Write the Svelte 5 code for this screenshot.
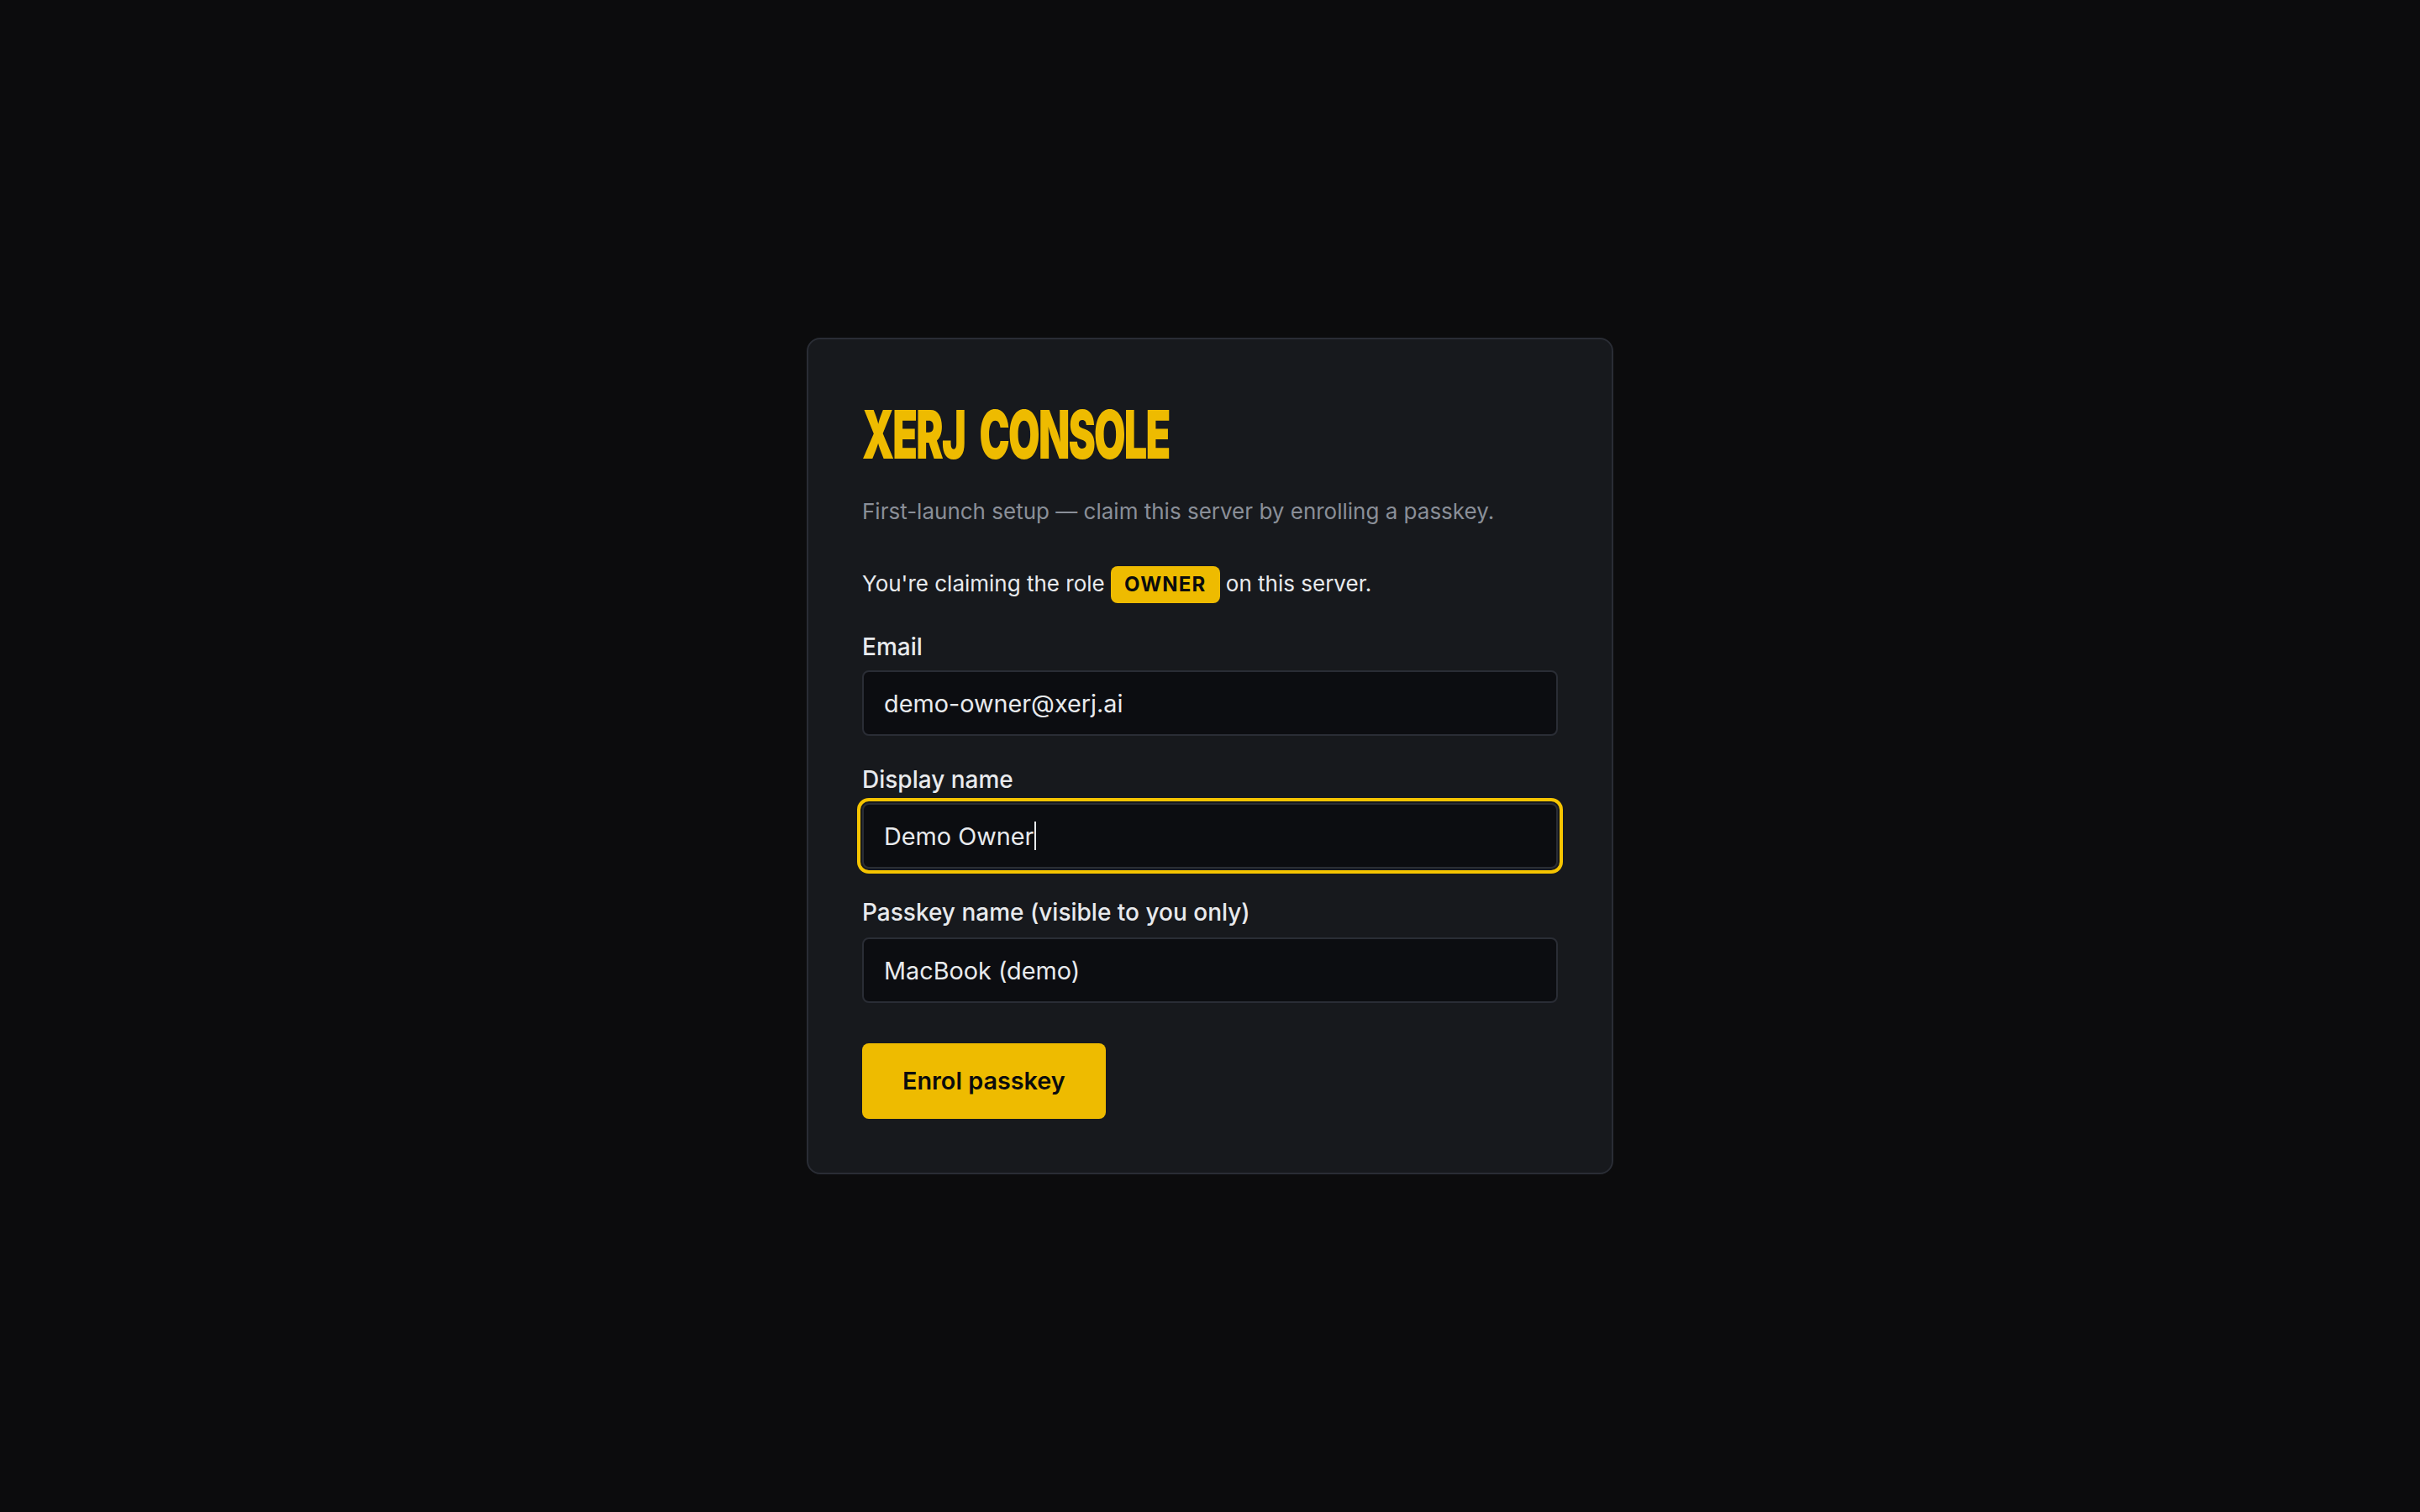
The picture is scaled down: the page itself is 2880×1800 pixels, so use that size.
<script>
  let email = 'demo-owner@xerj.ai';
  let displayName = 'Demo Owner';
  let passkeyName = 'MacBook (demo)';
</script>

<main class="page">
  <section class="card">
    <h1>XERJ CONSOLE</h1>
    <p class="sub">First-launch setup — claim this server by enrolling a passkey.</p>
    <p class="role">You're claiming the role <span class="badge">OWNER</span> on this server.</p>

    <form onsubmit={(e) => e.preventDefault()}>
      <label>
        <span>Email</span>
        <input type="email" bind:value={email} />
      </label>
      <label>
        <span>Display name</span>
        <div class="focus-wrap">
          <input class="focused" type="text" bind:value={displayName} />
          <i class="caret"></i>
        </div>
      </label>
      <label class="last">
        <span>Passkey name (visible to you only)</span>
        <input type="text" bind:value={passkeyName} />
      </label>
      <button type="submit">Enrol passkey</button>
    </form>
  </section>
</main>

<style>
  :global(body) {
    background: #0c0c0d;
    font-family: Inter, "Liberation Sans", sans-serif;
  }
  .page {
    min-height: 100vh;
    display: flex;
    align-items: center;
    justify-content: center;
  }
  .card {
    width: 960px;
    box-sizing: border-box;
    padding: 64px;
    background: #17191d;
    border: 2px solid #2a2d35;
    border-radius: 16px;
  }
  h1 {
    margin: 0 0 24px;
    font-size: 80px;
    line-height: 97px;
    font-weight: 900;
    color: #eebb00;
    letter-spacing: -3px;
    word-spacing: 16px;
    white-space: nowrap;
    transform: scaleX(0.607);
    transform-origin: left center;
  }
  .sub {
    margin: 0 0 44px;
    font-size: 26px;
    line-height: 40px;
    color: #8a8f98;
  }
  .role {
    height: 44px;
    margin: 0 0 31px;
    font-size: 26px;
    line-height: 44px;
    color: #e8eaed;
  }
  .badge {
    display: inline-block;
    padding: 0 16px;
    line-height: 44px;
    background: #eebb00;
    color: #0b0c0d;
    border-radius: 8px;
    font-size: 24px;
    font-weight: 700;
    letter-spacing: 1.2px;
  }
  form {
    display: flex;
    flex-direction: column;
    gap: 30px;
    align-items: flex-start;
  }
  label {
    display: flex;
    flex-direction: column;
    gap: 6px;
    width: 100%;
    font-size: 28px;
    line-height: 44px;
    font-weight: 500;
    color: #e8eaed;
  }
  .last {
    gap: 8px;
  }
  input {
    box-sizing: border-box;
    width: 100%;
    height: 78px;
    padding: 0 24px;
    background: #0c0d11;
    border: 2px solid #2a2d35;
    border-radius: 8px;
    color: #e8eaed;
    font-family: inherit;
    font-size: 28.8px;
    outline: none;
  }
  .focus-wrap {
    position: relative;
    display: flex;
  }
  input.focused {
    outline: 4px solid #f5c400;
    outline-offset: 2px;
  }
  .caret {
    position: absolute;
    left: 205px;
    top: 22px;
    width: 2px;
    height: 34px;
    background: #e8eaed;
  }
  button {
    margin-top: 18px;
    padding: 0 48px 2px;
    height: 90px;
    border: 0;
    border-radius: 8px;
    background: #eebb00;
    color: #0b0c0d;
    font-family: inherit;
    font-size: 28.8px;
    font-weight: 600;
    cursor: pointer;
  }
</style>
